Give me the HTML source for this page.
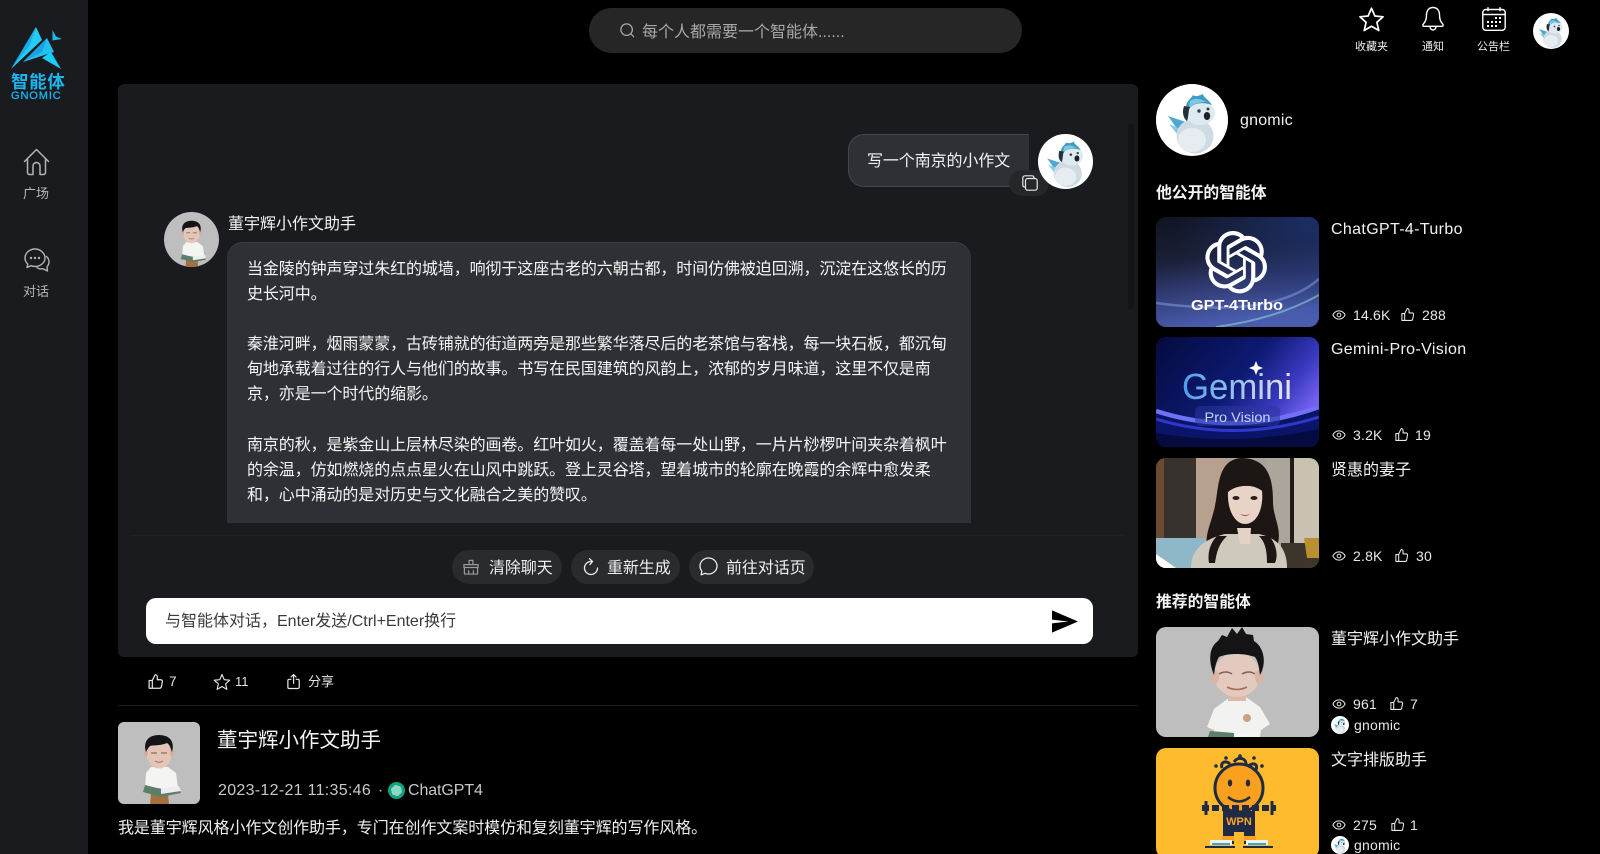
<!DOCTYPE html>
<html lang="zh">
<head>
<meta charset="utf-8">
<title>gnomic</title>
<style>
*{box-sizing:border-box;margin:0;padding:0}
html,body{width:1600px;height:854px;overflow:hidden;background:#000}
body{position:relative;font-family:"Liberation Sans","Noto Sans CJK SC",sans-serif;color:#fff}
.a{position:absolute}
.t{position:absolute;white-space:nowrap}
svg{display:block;overflow:visible}
.s{fill:none;stroke:currentColor;stroke-linecap:round;stroke-linejoin:round}
.card{position:absolute;left:1156px;width:163px;height:110px;border-radius:10px;overflow:hidden}
.ct{position:absolute;left:1331px;font-size:16px;line-height:24px;white-space:nowrap;color:#f2f2f2}
.st{position:absolute;font-size:14px;line-height:20px;white-space:nowrap;color:#e8e8e8;letter-spacing:.2px}
.pill{position:absolute;top:550px;height:34px;border-radius:17px;background:#2a2b2f}
.pt{position:absolute;top:552px;line-height:34px;font-size:16px;letter-spacing:-.1px;color:#eee;white-space:nowrap}
</style>
</head>
<body>
<svg width="0" height="0" style="position:absolute">
<defs>
<symbol id="eye" viewBox="0 0 24 24"><path class="s" stroke-width="1.700" d="M1.500 12C4 7 8 5 12 5s8 2 10.500 7c-2.500 5-6.500 7-10.500 7S4 17 1.500 12z"/><circle class="s" stroke-width="1.700" cx="12" cy="12" r="3.200"/></symbol>
<symbol id="thumb" viewBox="0 0 24 24"><path class="s" stroke-width="1.700" d="M7.500 10.500V21.500H3V10.500zM7.500 10.500L11.500 2.500C13.200 2.500 14.500 3.800 14.500 5.500V9.500H19.500C21 9.500 22 10.800 21.700 12.200L20.300 19.500C20 20.700 19 21.500 17.800 21.500H7.500"/></symbol>
<symbol id="snow" viewBox="0 0 72 72">
<circle cx="36" cy="36" r="36" fill="#fff"/>
<path d="M12 32L30 38 38 50 24 49z" fill="#4fa9cf"/>
<path d="M13 40L27 46 31 52 21 50z" fill="#86cbe3"/>
<ellipse cx="39" cy="52" rx="18.500" ry="17.500" fill="#cfdbe3"/>
<ellipse cx="36" cy="56" rx="14" ry="12" fill="#e6ecf0"/>
<ellipse cx="44" cy="29" rx="15" ry="12" fill="#dfeaf0"/>
<path d="M30 22C31 16 35 15 37 11 39 13 43 12 47 10 47 13 52 15 56 21 48 18 38 18 33 25z" fill="#3e9cc4"/>
<path d="M34 17C38 14 44 14 50 18 44 18 38 19 33 24z" fill="#7fc8df"/>
<path d="M28 22C26 28 27 34 31 37 33 32 32 27 34 23z" fill="#26303a"/>
<ellipse cx="51" cy="32" rx="3.200" ry="4" fill="#1d2228"/>
<circle cx="43" cy="27" r="1.700" fill="#2b3d52"/>
<circle cx="52" cy="25" r="1.500" fill="#2b3d52"/>
</symbol>
<symbol id="dong" viewBox="0 0 82 82">
<rect width="82" height="82" fill="#bebebe"/>
<path d="M33 45h17l8 6 2 15H27l1-15z" fill="#f4f4f2"/>
<path d="M33 72h17l1 10H32z" fill="#a5703f"/>
<path d="M27 63l16 4 18-2 2 6-20 4-18-5z" fill="#5c7e6a"/>
<path d="M43 66l18-2 2 5-20 3z" fill="#ededed"/>
<ellipse cx="41" cy="32" rx="12.500" ry="14.500" fill="#e2c5b6"/>
<ellipse cx="28" cy="31" rx="2" ry="3.500" fill="#d4ad9d"/>
<ellipse cx="54" cy="31" rx="2" ry="3.500" fill="#d4ad9d"/>
<path d="M28 30C25 20 30 13 41 13 52 13 57 20 54 30 52 25 52 23 49 21 42 24 34 23 32 24 30 26 29 28 28 30z" fill="#141416"/>
<path d="M33 31h6m4 0h6" stroke="#8d6e60" stroke-width="1.300"/>
<path d="M37 39q4 2.500 8 0" stroke="#a46c5c" stroke-width="1" fill="none"/>
</symbol>
<symbol id="star" viewBox="0 0 24 24"><path class="s" stroke-width="1.500" d="M12 2l3 6.900 7.300.7-5.500 4.900 1.700 7.300L12 18l-6.500 3.800 1.700-7.300L1.700 9.600 9 8.900z"/></symbol>
</defs>
</svg>

<!-- sidebar -->
<div class="a" style="left:0;top:0;width:88px;height:854px;background:#1a1b1f"></div>
<svg class="a" style="left:0;top:0" width="80" height="80" viewBox="0 0 80 80">
<path d="M11 69L36 27 42 40z" fill="#28cafa"/>
<path d="M11 69L36 27 30 45z" fill="#17aee6"/>
<path d="M23 62L47 38 54 52z" fill="#22bff2"/>
<path d="M23 62L47 38 42 52z" fill="#1aa3dc"/>
<path d="M42 58L51 52 61 69z" fill="#17cdfc"/>
<path d="M52.500 30L56 36.500 62 39 52.500 40.500z" fill="#22b8ee"/>
</svg>
<div class="t" style="left:11px;top:71px;font-size:17.500px;line-height:22px;font-weight:700;color:#19b6f2;letter-spacing:.6px">智能体</div>
<div class="t" style="left:11px;top:90px;font-size:11px;line-height:12px;color:#19b6f2;letter-spacing:.9px;-webkit-text-stroke:.3px #19b6f2">GNOMIC</div>
<svg class="a" style="left:23px;top:148px;color:#b4b4b4" width="27" height="28" viewBox="0 0 27 28"><path class="s" stroke-width="1.500" d="M1.500 13.500L13.500 1.500l12 12M4.500 11v13.500a2 2 0 0 0 2 2H10V18a3.500 3.500 0 0 1 7 0v8.500h3.500a2 2 0 0 0 2-2V11"/></svg>
<div class="t" style="left:23px;top:184px;font-size:13px;line-height:20px;color:#b8b8b8">广场</div>
<svg class="a" style="left:24px;top:248px;color:#b4b4b4" width="26" height="25" viewBox="0 0 26 25"><path class="s" stroke-width="1.400" d="M11 1C5.500 1 1 5 1 10c0 2.500 1 4.500 2.800 6l-.8 3.500 4-1.800c1.200.5 2.600.8 4 .8 5.500 0 10-3.800 10-8.500S16.500 1 11 1z"/><path class="s" stroke-width="1.400" d="M22.500 8.500c1.700 1.500 2.500 3.500 2.500 5.300 0 2-.8 3.700-2 5l.5 4.200-4.500-2.300c-1.800.4-4 .3-6-1"/><circle cx="7" cy="10" r="1.200" fill="currentColor"/><circle cx="11" cy="10" r="1.200" fill="currentColor"/><circle cx="15" cy="10" r="1.200" fill="currentColor"/></svg>
<div class="t" style="left:23px;top:282px;font-size:13px;line-height:20px;color:#b8b8b8">对话</div>

<!-- search -->
<div class="a" style="left:589px;top:8px;width:433px;height:45px;border-radius:23px;background:#262626"></div>
<svg class="a" style="left:620px;top:23px;color:#aaa" width="15" height="15" viewBox="0 0 17 17"><circle class="s" stroke-width="1.400" cx="7.500" cy="7.500" r="6.500"/><path class="s" stroke-width="1.400" d="M12.300 12.300L15.500 15.500"/></svg>
<div class="t" style="left:642px;top:21px;font-size:16px;line-height:24px;color:#a8a8a8">每个人都需要一个智能体......</div>

<!-- top right -->
<svg class="a" style="left:1358px;top:6px;color:#fff" width="27" height="27"><use href="#star"/></svg>
<div class="t" style="left:1355px;top:39px;font-size:11px;line-height:16px;color:#eee">收藏夹</div>
<svg class="a" style="left:1421px;top:6px;color:#fff" width="24" height="26" viewBox="0 0 24 26"><path class="s" stroke-width="1.400" d="M12 1.500C7.500 1.500 5.500 5 5.500 9c0 5-1.500 7-3.500 9.500-.5 1 0 1.800 1 1.800h18c1 0 1.500-.8 1-1.800C20 16 18.500 14 18.500 9c0-4-2-7.500-6.500-7.500zM9 20.500c0 2 1.300 3.500 3 3.500s3-1.500 3-3.500"/></svg>
<div class="t" style="left:1422px;top:39px;font-size:11px;line-height:16px;color:#eee">通知</div>
<svg class="a" style="left:1482px;top:7px;color:#fff" width="24" height="24" viewBox="0 0 24 24"><rect class="s" stroke-width="1.400" x=".8" y="2.500" width="22.400" height="20.800" rx="3"/><path class="s" stroke-width="1.400" d="M.8 7.500h22.400M6 .7v3M18 .7v3"/><g fill="#fff"><rect x="13" y="10" width="2" height="2"/><rect x="17" y="10" width="2" height="2"/><rect x="5" y="14" width="2" height="2"/><rect x="9" y="14" width="2" height="2"/><rect x="13" y="14" width="2" height="2"/><rect x="17" y="14" width="2" height="2"/><rect x="5" y="18" width="2" height="2"/><rect x="9" y="18" width="2" height="2"/><rect x="13" y="18" width="2" height="2"/></g></svg>
<div class="t" style="left:1477px;top:39px;font-size:11px;line-height:16px;color:#eee">公告栏</div>
<svg class="a" style="left:1533px;top:13px" width="36" height="36"><use href="#snow"/></svg>

<!-- chat panel -->
<div class="a" style="left:118px;top:84px;width:1020px;height:573px;border-radius:6px;background:#1a1b1f"></div>
<div class="a" style="left:1128px;top:123px;width:6px;height:187px;border-radius:3px;background:#141519"></div>

<div class="a" style="left:848px;top:134px;width:181px;height:53px;background:#2f3035;border:1px solid #46474c;border-right:0;border-radius:16px 0 0 16px"></div>
<div class="t" style="left:867px;top:150px;font-size:16px;line-height:24px;letter-spacing:-.1px;color:#f2f2f2">写一个南京的小作文</div>
<div class="a" style="left:1009px;top:170px;width:40px;height:26px;border-radius:13px;background:#26272a"></div>
<svg class="a" style="left:1022px;top:175px;color:#e8e8e8" width="16" height="16" viewBox="0 0 16 16"><path class="s" stroke-width="1.200" d="M12 2.500A2 2 0 0 0 10 .8H3A2.200 2.200 0 0 0 .8 3v7A2 2 0 0 0 2.500 12"/><rect class="s" stroke-width="1.200" x="3.500" y="3.500" width="11.700" height="11.700" rx="2.200"/></svg>
<svg class="a" style="left:1038px;top:134px" width="55" height="55"><use href="#snow"/></svg>

<div class="a" style="left:164px;top:212px;width:55px;height:55px;border-radius:50%;overflow:hidden"><svg width="55" height="55"><use href="#dong"/></svg></div>
<div class="t" style="left:228px;top:213px;font-size:16px;line-height:24px;color:#f2f2f2">董宇辉小作文助手</div>
<div class="a" style="left:227px;top:242px;width:744px;height:281px;background:#2f3035;border-radius:16px 16px 0 0;box-shadow:inset 0 1px 0 #3d3e43"></div>
<div class="a" style="left:247px;top:257px;width:710px;height:266px;overflow:hidden;font-size:16px;line-height:25.100px;letter-spacing:-.1px;color:#f4f4f4;white-space:nowrap">当金陵的钟声穿过朱红的城墙，响彻于这座古老的六朝古都，时间仿佛被迫回溯，沉淀在这悠长的历<br>史长河中。<br><br>秦淮河畔，烟雨蒙蒙，古砖铺就的街道两旁是那些繁华落尽后的老茶馆与客栈，每一块石板，都沉甸<br>甸地承载着过往的行人与他们的故事。书写在民国建筑的风韵上，浓郁的岁月味道，这里不仅是南<br>京，亦是一个时代的缩影。<br><br>南京的秋，是紫金山上层林尽染的画卷。红叶如火，覆盖着每一处山野，一片片桫椤叶间夹杂着枫叶<br>的余温，仿如燃烧的点点星火在山风中跳跃。登上灵谷塔，望着城市的轮廓在晚霞的余辉中愈发柔<br>和，心中涌动的是对历史与文化融合之美的赞叹。</div>
<div class="a" style="left:130px;top:535px;width:995px;height:1px;background:#202126"></div>

<div class="pill" style="left:452px;width:110px"></div>
<svg class="a" style="left:463px;top:559px;color:#9a9a9a" width="16" height="16" viewBox="0 0 17 17"><path class="s" stroke-width="1.300" d="M6.500 6V1.500h4V6M1 6h15v3H1zM1.500 9v7h14V9M6 16v-3.500M11 16v-3.500"/></svg>
<div class="pt" style="left:489px">清除聊天</div>
<div class="pill" style="left:571px;width:109px"></div>
<svg class="a" style="left:583px;top:558px;color:#eee" width="16" height="18" viewBox="0 0 16 18"><path class="s" stroke-width="1.300" d="M8 3.500A6.500 6.500 0 1 0 14.500 10M6.500.7L9.500 3.500 7 6.500"/></svg>
<div class="pt" style="left:607px">重新生成</div>
<div class="pill" style="left:689px;width:125px"></div>
<svg class="a" style="left:699px;top:557px;color:#eee" width="19" height="19" viewBox="0 0 19 19"><path class="s" stroke-width="1.300" d="M9.500 1C4.800 1 1 4.500 1 9c0 2 .7 3.700 1.800 5l-.6 3.800 3.900-1.500c1 .5 2.200.7 3.400.7 4.700 0 8.500-3.500 8.500-8S14.200 1 9.500 1z"/></svg>
<div class="pt" style="left:726px">前往对话页</div>

<div class="a" style="left:146px;top:598px;width:947px;height:46px;border-radius:10px;background:#fff"></div>
<div class="t" style="left:165px;top:610px;font-size:16px;line-height:24px;color:#3a3a3a;letter-spacing:0">与智能体对话，Enter发送/Ctrl+Enter换行</div>
<svg class="a" style="left:1052px;top:610px" width="26" height="23" viewBox="0 0 27 23"><path d="M0 0L27 11.500 0 23V13.500L17 11.500 0 9.500z" fill="#000"/></svg>

<!-- actions -->
<svg class="a" style="left:147px;top:673px;color:#e8e8e8" width="17" height="17"><use href="#thumb"/></svg>
<div class="t" style="left:169px;top:672px;font-size:13.500px;line-height:20px;color:#e4e4e4">7</div>
<svg class="a" style="left:213px;top:673px;color:#e8e8e8" width="18" height="18"><use href="#star"/></svg>
<div class="t" style="left:235px;top:672px;font-size:13px;line-height:20px;color:#e4e4e4">11</div>
<svg class="a" style="left:287px;top:673px;color:#e8e8e8" width="14" height="17" viewBox="0 0 16 18"><path class="s" stroke-width="1.400" d="M4.500 6.500H2.500a1.500 1.500 0 0 0-1.500 1.500v7.500A1.500 1.500 0 0 0 2.500 17h10a1.500 1.500 0 0 0 1.500-1.500V8a1.500 1.500 0 0 0-1.500-1.500h-2M7.500 11V1M4.700 3.800L7.500 1l2.800 2.800"/></svg>
<div class="t" style="left:308px;top:672px;font-size:13px;line-height:20px;color:#e4e4e4">分享</div>
<div class="a" style="left:118px;top:705px;width:1020px;height:1px;background:#1c1c1e"></div>

<!-- agent info -->
<div class="a" style="left:118px;top:722px;width:82px;height:82px;border-radius:6px;overflow:hidden"><svg width="82" height="82"><use href="#dong"/></svg></div>
<div class="t" style="left:217px;top:726px;font-size:20.500px;line-height:30px;color:#f4f4f4">董宇辉小作文助手</div>
<div class="t" style="left:218px;top:779px;font-size:16px;line-height:24px;color:#c8c8c8;letter-spacing:.3px">2023-12-21 11:35:46 <span style="margin:0 2px">·</span></div>
<div class="a" style="left:388px;top:782px;width:17px;height:17px;border-radius:50%;background:#10a37f"></div>
<svg class="a" style="left:391px;top:785px" width="11" height="11" viewBox="0 0 24 24"><path fill="#8fd6c2" d="M22.282 9.821a5.985 5.985 0 0 0-.516-4.911 6.046 6.046 0 0 0-6.510-2.900A6.065 6.065 0 0 0 4.981 4.182a5.985 5.985 0 0 0-3.998 2.900 6.046 6.046 0 0 0 .743 7.097 5.980 5.980 0 0 0 .511 4.911 6.051 6.051 0 0 0 6.515 2.900A5.985 5.985 0 0 0 13.260 24a6.056 6.056 0 0 0 5.772-4.206 5.989 5.989 0 0 0 3.998-2.900 6.056 6.056 0 0 0-.748-7.073z"/></svg>
<div class="t" style="left:408px;top:779px;font-size:16px;line-height:24px;color:#c8c8c8;letter-spacing:-.1px">ChatGPT4</div>
<div class="t" style="left:118px;top:817px;font-size:16px;line-height:24px;letter-spacing:-.08px;color:#f0f0f0">我是董宇辉风格小作文创作助手，专门在创作文案时模仿和复刻董宇辉的写作风格。</div>

<!-- right column -->
<svg class="a" style="left:1156px;top:84px" width="72" height="72"><use href="#snow"/></svg>
<div class="t" style="left:1240px;top:109px;font-size:16px;line-height:24px;color:#f0f0f0;letter-spacing:.2px">gnomic</div>
<div class="t" style="left:1156px;top:182px;font-size:15.800px;line-height:24px;font-weight:700;color:#f4f4f4">他公开的智能体</div>

<!-- GPT card -->
<div class="card" style="top:217px">
<svg width="163" height="110" viewBox="0 0 163 110">
<defs>
<linearGradient id="g1" x1="0" y1="0" x2=".25" y2="1"><stop offset="0" stop-color="#0f1420"/><stop offset=".4" stop-color="#1a2038"/><stop offset=".72" stop-color="#35407c"/><stop offset="1" stop-color="#4a5cae"/></linearGradient>
<radialGradient id="g1b" cx="1" cy="0" r=".9"><stop offset="0" stop-color="#1c2f6c" stop-opacity=".95"/><stop offset="1" stop-color="#1c2d5e" stop-opacity="0"/></radialGradient>
</defs>
<rect width="163" height="110" fill="url(#g1)"/>
<rect width="163" height="110" fill="url(#g1b)"/>
<path d="M0 86Q60 94 100 88T163 62" stroke="#7d9be0" stroke-width="2.500" fill="none" opacity=".55"/>
<path d="M60 110Q120 102 163 78" stroke="#86c6cf" stroke-width="2" fill="none" opacity=".65"/>
<g transform="translate(49 14) scale(2.600)"><path fill="#fff" d="M22.2819 9.8211a5.9847 5.9847 0 0 0-.5157-4.9108 6.0462 6.0462 0 0 0-6.5098-2.9A6.0651 6.0651 0 0 0 4.9807 4.1818a5.9847 5.9847 0 0 0-3.9977 2.9 6.0462 6.0462 0 0 0 .7427 7.0966 5.98 5.98 0 0 0 .511 4.9107 6.051 6.051 0 0 0 6.5146 2.9001A5.9847 5.9847 0 0 0 13.2599 24a6.0557 6.0557 0 0 0 5.7718-4.2058 5.9894 5.9894 0 0 0 3.9977-2.9001 6.0557 6.0557 0 0 0-.7475-7.0729zm-9.022 12.6081a4.4755 4.4755 0 0 1-2.8764-1.0408l.1419-.0804 4.7783-2.7582a.7948.7948 0 0 0 .3927-.6813v-6.7369l2.02 1.1686a.071.071 0 0 1 .038.052v5.5826a4.504 4.504 0 0 1-4.4945 4.4944zm-9.6607-4.1254a4.4708 4.4708 0 0 1-.5346-3.0137l.142.0852 4.783 2.7582a.7712.7712 0 0 0 .7806 0l5.8428-3.3685v2.3324a.0804.0804 0 0 1-.0332.0615L9.74 19.9502a4.4992 4.4992 0 0 1-6.1408-1.6464zM2.3408 7.8956a4.485 4.485 0 0 1 2.3655-1.9728V11.6a.7664.7664 0 0 0 .3879.6765l5.8144 3.3543-2.0201 1.1685a.0757.0757 0 0 1-.071 0l-4.8303-2.7865A4.504 4.504 0 0 1 2.3408 7.872zm16.5963 3.8558L13.1038 8.364 15.1192 7.2a.0757.0757 0 0 1 .071 0l4.8303 2.7913a4.4944 4.4944 0 0 1-.6765 8.1042v-5.6772a.79.79 0 0 0-.407-.667zm2.0107-3.0231l-.142-.0852-4.7735-2.7818a.7759.7759 0 0 0-.7854 0L9.409 9.2297V6.8974a.0662.0662 0 0 1 .0284-.0615l4.8303-2.7866a4.4992 4.4992 0 0 1 6.6802 4.66zM8.3065 12.863l-2.02-1.1638a.0804.0804 0 0 1-.038-.0567V6.0742a4.4992 4.4992 0 0 1 7.3757-3.4537l-.142.0805L8.704 5.459a.7948.7948 0 0 0-.3927.6813zm1.0976-2.3654l2.602-1.4998 2.6069 1.4998v2.9994l-2.5974 1.4997-2.6067-1.4997Z"/></g>
<text x="81" y="93" text-anchor="middle" font-family="Liberation Sans" font-weight="700" font-size="15" fill="#fff" textLength="92" lengthAdjust="spacingAndGlyphs">GPT-4Turbo</text>
</svg>
</div>
<div class="ct" style="top:218px;letter-spacing:.35px">ChatGPT-4-Turbo</div>
<svg class="a" style="left:1332px;top:308px;color:#e8e8e8" width="14" height="14"><use href="#eye"/></svg>
<div class="st" style="left:1353px;top:305px">14.6K</div>
<svg class="a" style="left:1400px;top:307px;color:#e8e8e8" width="15" height="15"><use href="#thumb"/></svg>
<div class="st" style="left:1422px;top:305px">288</div>

<!-- Gemini card -->
<div class="card" style="top:337px">
<svg width="163" height="110" viewBox="0 0 163 110">
<defs>
<linearGradient id="g2" x1="0" y1="0" x2="1" y2=".55"><stop offset="0" stop-color="#050b3e"/><stop offset=".55" stop-color="#0d1a72"/><stop offset=".82" stop-color="#3a39c0"/><stop offset="1" stop-color="#7461f0"/></linearGradient>
<linearGradient id="g3" x1="0" x2="1"><stop offset="0" stop-color="#4c9cf0"/><stop offset=".5" stop-color="#9cc4ec"/><stop offset="1" stop-color="#e8e8ee"/></linearGradient>
</defs>
<rect width="163" height="110" fill="url(#g2)"/>
<path d="M0 72Q80 100 163 68V110H0z" fill="#0a1468"/>
<path d="M0 74Q80 100 163 70" stroke="#6f72f5" stroke-width="4.500" fill="none"/>
<path d="M0 82Q80 106 163 80" stroke="#2f38c8" stroke-width="3" fill="none"/>
<path d="M0 110V96Q80 110 163 92V110z" fill="#050b3e"/>
<path d="M100 24l2 5 5 2-5 2-2 5-2-5-5-2 5-2z" fill="#fff"/>
<text x="26" y="62" font-family="Liberation Sans" font-size="36" fill="url(#g3)" textLength="110" lengthAdjust="spacingAndGlyphs">Gemini</text>
<rect x="39" y="69" width="85" height="20" rx="5" fill="#2a36a0" opacity=".55"/>
<text x="81.500" y="85" text-anchor="middle" font-family="Liberation Sans" font-size="14" fill="#c8d4f6" textLength="66" lengthAdjust="spacingAndGlyphs">Pro Vision</text>
</svg>
</div>
<div class="ct" style="top:338px;letter-spacing:.35px">Gemini-Pro-Vision</div>
<svg class="a" style="left:1332px;top:428px;color:#e8e8e8" width="14" height="14"><use href="#eye"/></svg>
<div class="st" style="left:1353px;top:425px">3.2K</div>
<svg class="a" style="left:1394px;top:427px;color:#e8e8e8" width="15" height="15"><use href="#thumb"/></svg>
<div class="st" style="left:1415px;top:425px">19</div>

<!-- woman card -->
<div class="card" style="top:458px">
<svg width="163" height="110" viewBox="0 0 163 110">
<rect width="163" height="110" fill="#a9a298"/>
<rect x="0" width="12" height="85" fill="#6b4a30"/>
<rect x="8" width="32" height="85" fill="#38322e"/>
<rect x="40" width="30" height="85" fill="#b7a08e"/>
<rect x="110" width="26" height="85" fill="#aba59c"/>
<rect x="134" width="4" height="85" fill="#1f1c1a"/>
<rect x="138" width="25" height="85" fill="#c9c1b2"/>
<rect x="0" y="80" width="50" height="30" fill="#8eb8c8"/>
<path d="M0 96L20 110H0z" fill="#fff"/>
<rect x="125" y="85" width="38" height="25" fill="#3d342c"/>
<path d="M148 80h15v20h-12z" fill="#b9902f"/>
<g transform="translate(9 0)">
<path d="M76 0C52 2 54 30 50 48 46 66 40 76 42 88H112C118 72 108 60 108 44 108 22 104 0 76 0z" fill="#1c1614"/>
<path d="M26 110C26 88 44 80 60 76H94C112 80 122 90 122 110z" fill="#cfc9bd"/>
<path d="M50 105C52 90 56 84 62 78H52C46 84 42 94 44 105zM102 105C102 92 100 84 94 78H104C110 84 114 96 110 105z" fill="#1c1614"/>
<path d="M72 70h14l-1 16H75z" fill="#e4d2c4"/>
<path d="M63 34C62 52 70 66 80 66 91 66 99 52 97 32 90 26 72 26 63 34z" fill="#e9d3c7"/>
<ellipse cx="71" cy="40" rx="3.500" ry="2" fill="#2a2020"/>
<ellipse cx="89" cy="40" rx="3.500" ry="2" fill="#2a2020"/>
<path d="M75 56q5 2 10 0q-5 4-10 0" fill="#a04a3a"/>
<path d="M60 36C66 20 92 18 100 36 92 25 70 25 60 36z" fill="#1c1614"/>
</g>
</svg>
</div>
<div class="ct" style="top:459px">贤惠的妻子</div>
<svg class="a" style="left:1332px;top:549px;color:#e8e8e8" width="14" height="14"><use href="#eye"/></svg>
<div class="st" style="left:1353px;top:546px">2.8K</div>
<svg class="a" style="left:1394px;top:548px;color:#e8e8e8" width="15" height="15"><use href="#thumb"/></svg>
<div class="st" style="left:1416px;top:546px">30</div>

<div class="t" style="left:1156px;top:591px;font-size:15.800px;line-height:24px;font-weight:700;color:#f4f4f4">推荐的智能体</div>

<!-- Dong card -->
<div class="card" style="top:627px">
<svg width="163" height="110" viewBox="0 0 163 110">
<rect width="163" height="110" fill="#bebebe"/>
<path d="M51 100L58 82 74 70H90L104 80 114 97 105 103 104 110H60L58 103z" fill="#f2f2f0"/>
<path d="M54 104l24 2v4H52z" fill="#5c7e6a"/>
<path d="M78 106l20 1v3H78z" fill="#f4f4f2"/>
<circle cx="91" cy="91" r="4" fill="#c9a184"/>
<rect x="72" y="62" width="18" height="12" fill="#dab9aa"/>
<ellipse cx="81" cy="48" rx="23" ry="22" fill="#e4cabe"/>
<ellipse cx="59" cy="50" rx="4" ry="7" fill="#d9b5a5"/>
<ellipse cx="103" cy="50" rx="4" ry="7" fill="#d9b5a5"/>
<path d="M58 48C52 34 53 20 62 14L66 8 71 10 76 1 81 7 86 0 90 7 97 8 98 14C108 20 111 36 104 48 103 40 102 34 99 30 88 26 72 26 63 30 60 35 59 40 58 48z" fill="#141416"/>
<path d="M63 47q7-4 13 0M86 47q7-4 13 0" stroke="#7d6258" stroke-width="1.500" fill="none"/>
<path d="M71 60q10 5 20 0" stroke="#a56c5c" stroke-width="1.600" fill="none"/>
</svg>
</div>
<div class="ct" style="top:628px">董宇辉小作文助手</div>
<svg class="a" style="left:1332px;top:697px;color:#e8e8e8" width="14" height="14"><use href="#eye"/></svg>
<div class="st" style="left:1353px;top:694px">961</div>
<svg class="a" style="left:1389px;top:696px;color:#e8e8e8" width="15" height="15"><use href="#thumb"/></svg>
<div class="st" style="left:1410px;top:694px">7</div>
<svg class="a" style="left:1331px;top:716px" width="18" height="18"><use href="#snow"/></svg>
<div class="st" style="left:1354px;top:715px;font-size:14px">gnomic</div>

<!-- yellow card -->
<div class="card" style="top:748px">
<svg width="163" height="110" viewBox="0 0 163 110">
<rect width="163" height="110" fill="#fdbb2d"/>
<circle cx="83" cy="40" r="24" fill="#f9a01e" stroke="#1f2a44" stroke-width="3"/>
<g stroke="#1f2a44" fill="none">
<path d="M66 20C64 14 70 12 74 16M78 14C82 8 90 10 90 16M92 18C98 14 102 16 100 22" stroke-width="3"/>
<path d="M46 60H120" stroke-width="6" stroke-dasharray="7 3"/>
<path d="M50 53v14M116 53v14" stroke-width="3"/>
<path d="M72 49q11 9 22 0" stroke-width="2.500"/>
</g>
<g fill="#1f2a44"><circle cx="60" cy="18" r="1.800"/><circle cx="70" cy="10" r="1.800"/><circle cx="84" cy="8" r="1.800"/><circle cx="98" cy="10" r="1.800"/><circle cx="106" cy="18" r="1.800"/><ellipse cx="74" cy="35" rx="2.200" ry="3.500"/><ellipse cx="92" cy="35" rx="2.200" ry="3.500"/></g>
<path d="M67 63H99V96H88V84H78V96H67z" fill="#1f2a44"/>
<text x="83" y="77" text-anchor="middle" font-family="Liberation Sans" font-weight="700" font-size="11" fill="#f8a52a">WPN</text>
<path d="M66 88h12v5H66zM88 88h12v5H88z" fill="#f9a01e"/>
<path d="M54 92h22v5H54zM90 92h22v5H90z" fill="#f2f2f2"/>
<path d="M56 95h18v2H56zM92 95h18v2H92z" fill="#2ea8e0"/>
<path d="M49 99H79M87 99H117" stroke="#1f2a44" stroke-width="2"/>
</svg>
</div>
<div class="ct" style="top:749px">文字排版助手</div>
<svg class="a" style="left:1332px;top:818px;color:#e8e8e8" width="14" height="14"><use href="#eye"/></svg>
<div class="st" style="left:1353px;top:815px">275</div>
<svg class="a" style="left:1390px;top:817px;color:#e8e8e8" width="15" height="15"><use href="#thumb"/></svg>
<div class="st" style="left:1410px;top:815px">1</div>
<svg class="a" style="left:1331px;top:836px" width="18" height="18"><use href="#snow"/></svg>
<div class="st" style="left:1354px;top:835px;font-size:14px">gnomic</div>
</body>
</html>
